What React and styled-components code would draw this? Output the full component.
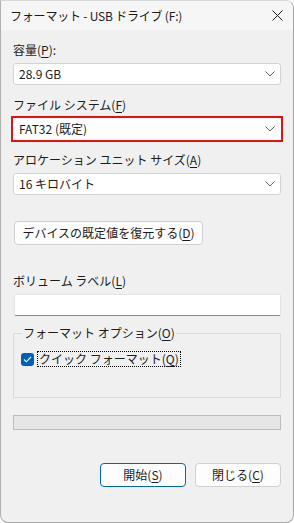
import React from "react";
import styled, { createGlobalStyle } from "styled-components";

const Global = createGlobalStyle`
  html, body { margin: 0; padding: 0; background: #ffffff; }
  body { font-family: "Noto Sans CJK JP", "Noto Sans", sans-serif; }
  * { box-sizing: border-box; }
`;

const Window = styled.div`
  width: 294px;
  height: 523px;
  background: #f0f0f0;
  border: 1px solid #a6a6a6;
  border-top-color: #d8d8d8;
  border-left-color: #b0b0b0;
  border-radius: 0 8px 8px 8px;
  overflow: hidden;
  display: flex;
  flex-direction: column;
  color: #1b1b1b;
  font-size: 12px;
  line-height: 16px;
`;

const TitleBar = styled.div`
  height: 29px;
  flex: none;
  display: flex;
  align-items: center;
  justify-content: space-between;
  padding: 0 10px 0 9px;
  background: #f6f6f6;
  font-size: 12px;
`;

const Title = styled.span`
  letter-spacing: -0.2px;
`;

const Content = styled.div`
  flex: 1;
  display: flex;
  flex-direction: column;
  padding: 12px 12px 0 12px;
`;

const Field = styled.div`
  display: flex;
  flex-direction: column;
  gap: 5px;
  margin-bottom: ${(p) => p.$mb || 0}px;
`;

const Label = styled.div`
  height: 16px;
  line-height: 16px;
  white-space: nowrap;
`;

const Key = styled.u`
  text-decoration: underline;
  text-underline-offset: 2px;
`;

const Combo = styled.div`
  height: 22px;
  display: flex;
  align-items: center;
  justify-content: space-between;
  padding: 0 5px 0 5px;
  background: #ffffff;
  border: 1px solid ${(p) => (p.$highlight ? "#ffffff" : "#d3d3d3")};
  border-radius: ${(p) => (p.$highlight ? "0" : "3px")};
  outline: ${(p) => (p.$highlight ? "2px solid #e8100f" : "none")};
  outline-offset: 0;
`;

const Chevron = () => (
  <svg width="10" height="6" viewBox="0 0 10 6" aria-hidden="true">
    <polyline points="0.5,0.5 5,5 9.5,0.5" fill="none" stroke="#5f5f5f" strokeWidth="1" />
  </svg>
);

const Button = styled.button`
  height: 24px;
  width: ${(p) => p.$w}px;
  font: inherit;
  font-size: 12px;
  line-height: 16px;
  color: #1b1b1b;
  background: #fdfdfd;
  border: 1px solid ${(p) => (p.$primary ? "#0067c0" : "#d0d0d0")};
  border-radius: 4px;
  padding: 0;
  white-space: nowrap;
`;

const RestoreRow = styled.div`
  display: flex;
  margin: 26px 0 28px 1px;
`;

const TextInput = styled.div`
  height: 22px;
  background: #ffffff;
  border: 1px solid #e3e3e3;
  border-bottom-color: #8a8a8a;
  border-radius: 2px;
  margin-left: 1px;
`;

const Group = styled.fieldset`
  margin: 9px 0 0 0;
  padding: 10px 0 30px 7px;
  border: 1px solid #dadada;
  min-width: 0;
`;

const Legend = styled.legend`
  padding: 0 1px;
  line-height: 16px;
  margin-left: 1px;
`;

const CheckRow = styled.div`
  display: flex;
  align-items: center;
  gap: 3px;
`;

const CheckBox = styled.span`
  width: 13px;
  height: 13px;
  border-radius: 3px;
  background: #005fb8;
  display: flex;
  align-items: center;
  justify-content: center;
`;

const FocusLabel = styled.span`
  border: 1px dotted #000;
  padding: 0 1px;
  line-height: 14px;
  height: 16px;
  white-space: nowrap;
`;

const Progress = styled.div`
  height: 15px;
  margin-top: 17px;
  background: #e6e6e6;
  border: 1px solid #bcbcbc;
`;

const Footer = styled.div`
  display: flex;
  justify-content: flex-end;
  gap: 9px;
  margin-top: 33px;
`;

export default function App() {
  return (
    <>
      <Global />
      <Window>
        <TitleBar>
          <Title>フォーマット - USB ドライブ (F:)</Title>
          <svg width="11" height="11" viewBox="0 0 11 11" aria-hidden="true">
            <path d="M0.5 0.5 L10.5 10.5 M10.5 0.5 L0.5 10.5" stroke="#1b1b1b" strokeWidth="1" fill="none" />
          </svg>
        </TitleBar>
        <Content>
          <Field $mb={12}>
            <Label>容量(<Key>P</Key>):</Label>
            <Combo>
              <span>28.9 GB</span>
              <Chevron />
            </Combo>
          </Field>
          <Field $mb={12}>
            <Label>ファイル システム(<Key>F</Key>)</Label>
            <Combo $highlight>
              <span>FAT32 (既定)</span>
              <Chevron />
            </Combo>
          </Field>
          <Field>
            <Label>アロケーション ユニット サイズ(<Key>A</Key>)</Label>
            <Combo>
              <span>16 キロバイト</span>
              <Chevron />
            </Combo>
          </Field>
          <RestoreRow>
            <Button $w={189}>デバイスの既定値を復元する(<Key>D</Key>)</Button>
          </RestoreRow>
          <Field>
            <Label>ボリューム ラベル(<Key>L</Key>)</Label>
            <TextInput />
          </Field>
          <Group>
            <Legend>フォーマット オプション(<Key>O</Key>)</Legend>
            <CheckRow>
              <CheckBox>
                <svg width="9" height="7" viewBox="0 0 9 7" aria-hidden="true">
                  <polyline points="1,3.5 3.3,5.8 8,1" fill="none" stroke="#ffffff" strokeWidth="1.1" />
                </svg>
              </CheckBox>
              <FocusLabel>クイック フォーマット(<Key>Q</Key>)</FocusLabel>
            </CheckRow>
          </Group>
          <Progress />
          <Footer>
            <Button $w={86} $primary>開始(<Key>S</Key>)</Button>
            <Button $w={86}>閉じる(<Key>C</Key>)</Button>
          </Footer>
        </Content>
      </Window>
    </>
  );
}
